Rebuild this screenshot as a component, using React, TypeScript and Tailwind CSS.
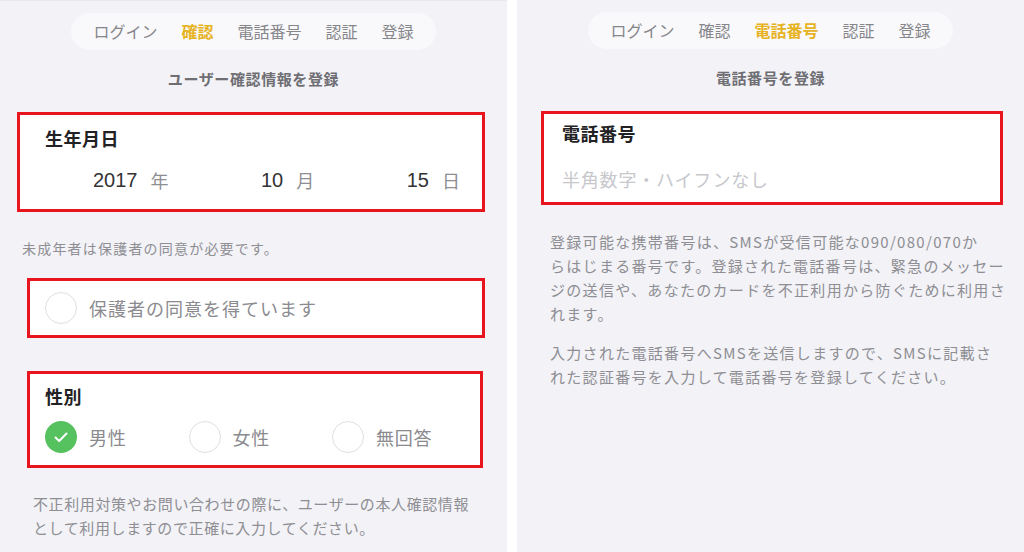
import React from 'react'

const steps = ['ログイン', '確認', '電話番号', '認証', '登録']

function StepBar({ active }: { active: string }) {
  return (
    <div className="mx-auto mt-[12px] flex h-[37px] items-center gap-[24px] rounded-full bg-[#f9f9fb] px-[22px] pb-[1px] text-[16px] leading-none">
      {steps.map((s) => (
        <span
          key={s}
          className={s === active ? 'font-bold text-[#e6b325]' : 'text-[#86868b]'}
        >
          {s}
        </span>
      ))}
    </div>
  )
}

function Radio({ checked }: { checked?: boolean }) {
  if (checked) {
    return (
      <span className="flex h-[32px] w-[32px] shrink-0 items-center justify-center rounded-full bg-[#55c15f]">
        <svg width="14" height="11" viewBox="0 0 14 11" fill="none">
          <path d="M1.5 5.5 L5.2 9 L12.5 1.5" stroke="white" strokeWidth="2" strokeLinecap="round" strokeLinejoin="round" />
        </svg>
      </span>
    )
  }
  return <span className="h-[32px] w-[32px] shrink-0 rounded-full border border-[#dfdfe3] bg-white" />
}

function DateField({ value, unit }: { value: string; unit: string }) {
  return (
    <div className="flex items-center gap-[13px]">
      <span className="font-['Liberation_Sans',sans-serif] text-[20px] text-[#333336]">{value}</span>
      <span className="text-[18px] text-[#8e8e93]">{unit}</span>
    </div>
  )
}

export default function App() {
  return (
    <div className="flex h-[552px] w-[1024px] overflow-hidden bg-white font-['Noto_Sans_CJK_JP',sans-serif]">
      {/* 確認ステップ */}
      <div className="flex w-[507px] flex-col border-t border-[#e8e8ed] bg-[#f2f2f7]">
        <StepBar active="確認" />
        <p className="mt-[19px] h-[20px] text-center text-[15px] font-bold leading-[20px] tracking-[0.6px] text-[#6e6e73]">
          ユーザー確認情報を登録
        </p>

        <div className="ml-[17px] mt-[23px] h-[100px] w-[468px] border-[3px] border-[#e8141e] bg-white">
          <p className="pl-[25px] pt-[13px] text-[18px] font-bold leading-[20px] tracking-[0.5px] text-[#222224]">
            生年月日
          </p>
          <div className="mt-[17px] flex items-center justify-between pl-[73px] pr-[22px]">
            <DateField value="2017" unit="年" />
            <DateField value="10" unit="月" />
            <DateField value="15" unit="日" />
          </div>
        </div>

        <p className="ml-[22px] mt-[26px] text-[14px] leading-[20px] tracking-[1.2px] text-[#8e8e93]">
          未成年者は保護者の同意が必要です。
        </p>

        <div className="ml-[27px] mt-[20px] flex h-[60px] w-[458px] items-center gap-[12px] border-[3px] border-[#e8141e] bg-white pl-[15px]">
          <Radio />
          <span className="text-[18px] tracking-[1px] text-[#8a8a8f]">保護者の同意を得ています</span>
        </div>

        <div className="ml-[27px] mt-[33px] h-[97px] w-[456px] border-[3px] border-[#e8141e] bg-white pl-[15px]">
          <p className="pt-[12px] text-[18px] font-bold leading-[20px] tracking-[0.5px] text-[#222224]">性別</p>
          <div className="mt-[15px] flex">
            {[
              ['男性', true],
              ['女性', false],
              ['無回答', false],
            ].map(([label, on]) => (
              <div key={label as string} className="flex w-[143.5px] items-center gap-[12px]">
                <Radio checked={on as boolean} />
                <span className="text-[18px] tracking-[0.8px] text-[#8a8a8f]">{label as string}</span>
              </div>
            ))}
          </div>
        </div>

        <p className="ml-[33px] mt-[24px] text-[15px] leading-[24px] tracking-[0.6px] text-[#8e8e93]">
          不正利用対策やお問い合わせの際に、ユーザーの本人確認情報
          <br />
          として利用しますので正確に入力してください。
        </p>
      </div>

      {/* 電話番号ステップ */}
      <div className="ml-[10px] flex flex-1 flex-col bg-[#f2f2f7]">
        <StepBar active="電話番号" />
        <p className="mt-[19px] h-[20px] text-center text-[15px] font-bold leading-[20px] tracking-[0.6px] text-[#6e6e73]">
          電話番号を登録
        </p>

        <div className="ml-[24px] mt-[23px] h-[94px] w-[462px] border-[3px] border-[#e8141e] bg-white pl-[18px]">
          <p className="pt-[9px] text-[18px] font-bold leading-[20px] tracking-[0.5px] text-[#222224]">電話番号</p>
          <p className="mt-[25px] text-[18px] leading-[22px] tracking-[0.8px] text-[#c7c7cc]">半角数字・ハイフンなし</p>
        </div>

        <div className="ml-[33px] mt-[25px] text-[15px] leading-[24px] tracking-[1.3px] text-[#8e8e93]">
          <p>
            登録可能な携帯番号は、SMSが受信可能な090/080/070か
            <br />
            らはじまる番号です。登録された電話番号は、緊急のメッセー
            <br />
            ジの送信や、あなたのカードを不正利用から防ぐために利用さ
            <br />
            れます。
          </p>
          <p className="mt-[15px]">
            入力された電話番号へSMSを送信しますので、SMSに記載さ
            <br />
            れた認証番号を入力して電話番号を登録してください。
          </p>
        </div>
      </div>
    </div>
  )
}
